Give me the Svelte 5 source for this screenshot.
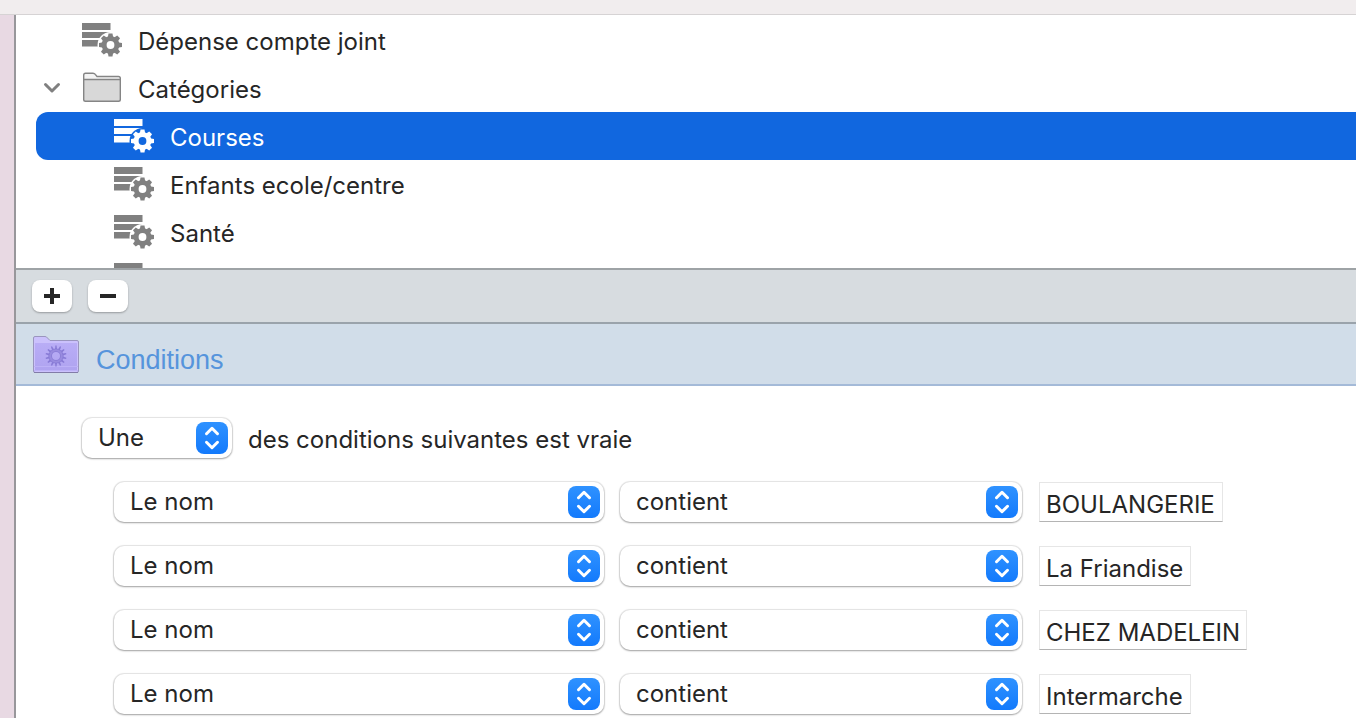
<script>
  const tree = [
    { id: 1, label: 'Dépense compte joint', depth: 0, kind: 'rule' },
    { id: 2, label: 'Catégories', depth: 0, kind: 'folder' },
    { id: 3, label: 'Courses', depth: 1, kind: 'rule' },
    { id: 4, label: 'Enfants ecole/centre', depth: 1, kind: 'rule' },
    { id: 5, label: 'Santé', depth: 1, kind: 'rule' },
    { id: 6, label: '', depth: 1, kind: 'rule' }
  ];

  const conditions = [
    { id: 1, value: 'BOULANGERIE', width: 184 },
    { id: 2, value: 'La Friandise', width: 152 },
    { id: 3, value: 'CHEZ MADELEIN', width: 208 },
    { id: 4, value: 'Intermarche', width: 152 }
  ];

  const teeth = [0, 45, 90, 135, 180, 225, 270, 315];
  const folderTeeth = Array.from({ length: 14 }, (_, i) => (i * 360) / 14);

  let selected = $state(3);
</script>

{#snippet popup(label, value, options)}
  <span class="popup">
    <select aria-label={label} {value}>
      {#each options as option}
        <option value={option}>{option}</option>
      {/each}
    </select>
    <svg class="arrows" viewBox="0 0 32 32" aria-hidden="true">
      <path d="M10.5 11.7 L16 6.3 L21.5 11.7 M10.5 20.3 L16 25.7 L21.5 20.3" />
    </svg>
  </span>
{/snippet}

<div class="window">
  <div class="titlebar"></div>

  <div class="body">
    <main class="pane">
      <!-- Rule tree -->
      <ul class="tree">
        {#each tree as item (item.id)}
          <li class="row" class:child={item.depth === 1} class:selected={selected === item.id}>
            <span class="gutter">
              {#if item.kind === 'folder'}
                <button class="disclosure" aria-label="Replier">
                  <svg viewBox="0 0 20 12" width="20" height="12"><path d="M3.5 2.5 L10 9 L16.500 2.5" /></svg>
                </button>
              {/if}
            </span>
            <button class="item" aria-label={item.label || 'Règle'} onclick={() => (selected = item.id)}>
              {#if item.kind === 'folder'}
                <svg class="icon" viewBox="0 0 40 34" aria-hidden="true">
                  <path
                    class="folder-back"
                    d="M1.7 9 V4 Q1.7 2.2 3.5 2.2 H11 Q12.5 2.2 13.3 3.4 L15 5.5 H36.5 Q38.3 5.5 38.3 7.3 V9 Z"
                  />
                  <path
                    class="folder-front"
                    d="M1.7 8.5 H38.3 V28.5 Q38.3 30.3 36.5 30.3 H3.5 Q1.7 30.3 1.7 28.5 Z"
                  />
                </svg>
              {:else}
                <svg class="icon" viewBox="0 0 40 34" aria-hidden="true">
                  <path class="ink" d="M0 0 H28.5 V7 H0 Z M0 9 H28.5 V15 H0 Z M0 17 H20 V23.5 H0 Z" />
                  <circle class="halo" cx="28.5" cy="22" r="13" />
                  {#each teeth as angle}
                    <path class="ink" d="M25.7 15 L26.5 10.5 H30.5 L31.3 15 Z" transform="rotate({angle} 28.5 22)" />
                  {/each}
                  <circle class="ring" cx="28.5" cy="22" r="6.4" />
                </svg>
              {/if}
              <span>{item.label}</span>
            </button>
          </li>
        {/each}
      </ul>

      <div class="toolbar">
        <button class="square" aria-label="Ajouter">
          <svg viewBox="0 0 16 16" width="16" height="16"><path d="M0 8 H16 M8 0 V16" /></svg>
        </button>
        <button class="square" aria-label="Supprimer">
          <svg viewBox="0 0 16 16" width="16" height="16"><path d="M0 8 H16" /></svg>
        </button>
      </div>

      <header class="section">
        <svg viewBox="0 0 48 40" width="48" height="40" aria-hidden="true">
          <defs>
            <linearGradient id="lilac" x1="0" y1="0" x2="0" y2="1">
              <stop offset="0" stop-color="#b9adf6" />
              <stop offset="1" stop-color="#afa3f0" />
            </linearGradient>
          </defs>
          <path
            d="M1.5 37 V4 Q1.5 2.5 3 2.5 H13 Q14.500 2.5 15.5 4 L18 6.5 H45 Q46.5 6.5 46.5 8 V37 Q46.5 38.5 45 38.5 H3 Q1.5 38.5 1.5 37 Z"
            fill="#cbc1fc"
            stroke="#9a95be"
          />
          <path d="M3 9 H45 V37 H3 Z" fill="url(#lilac)" />
          <path d="M2 32.5 H46 M2 36.5 H46" stroke="#bdb2f7" />
          <path d="M2 38.5 H46" stroke="#827ca8" />
          {#each folderTeeth as angle}
            <path d="M23 15 L23.4 11.5 H24.600 L25 15 Z" fill="#887bd6" transform="rotate({angle} 24 22)" />
          {/each}
          <circle cx="24" cy="22" r="5.8" fill="none" stroke="#887bd6" stroke-width="3.6" />
          <circle cx="24" cy="22" r="5.8" fill="none" stroke="#988bdf" stroke-width="2" />
        </svg>
        <h2>Conditions</h2>
      </header>

      <!-- Conditions editor -->
      <form class="conditions">
        <div class="match">
          {@render popup('Correspondance', 'Une', ['Une', 'Toutes'])}
          <span>des conditions suivantes est vraie</span>
        </div>

        {#each conditions as condition (condition.id)}
          <div class="condition">
            {@render popup('Critère', 'Le nom', ['Le nom', 'Le montant'])}
            {@render popup('Opérateur', 'contient', ['contient', 'est'])}
            <input type="text" aria-label="Valeur" value={condition.value} style:width="{condition.width}px" />
          </div>
        {/each}
      </form>
    </main>
  </div>
</div>

<style>
  :global(body) {
    margin: 0;
    background: #fff;
  }

  .window {
    height: 100vh;
    display: flex;
    flex-direction: column;
    overflow: hidden;
    font-family: Inter, 'Liberation Sans', sans-serif;
    font-size: 24px;
    line-height: 32px;
    color: #262626;
  }

  .window * {
    box-sizing: border-box;
  }

  button,
  select,
  input {
    margin: 0;
    border: 0;
    font: inherit;
    color: inherit;
    outline: none;
  }

  .titlebar {
    flex: none;
    height: 15px;
    background: #f1edee;
    border-bottom: 1px solid #d6d3d4;
  }

  .body {
    flex: 1;
    min-height: 0;
    padding-left: 14px;
    background: #e8d9e3;
  }

  .pane {
    height: 100%;
    overflow: hidden;
    border-left: 2px solid #98979b;
    background: #fff;
  }

  /* Tree */

  .tree {
    height: 255px;
    margin: 0;
    padding: 1px 0 0 20px;
    overflow: hidden;
    list-style: none;
    border-bottom: 2px solid #9ea3a6;
  }

  .row {
    --row-bg: #fff;
    --ink: #808080;
    display: flex;
    height: 48px;
    background: var(--row-bg);
  }

  .row.selected {
    --row-bg: #1167df;
    --ink: #fff;
    border-radius: 12px 0 0 12px;
    color: #fff;
  }

  .gutter {
    display: flex;
    flex: none;
    align-items: center;
    width: 46px;
    padding-left: 6px;
  }

  .child .gutter {
    width: 78px;
  }

  .item {
    display: flex;
    flex: 1;
    gap: 16px;
    align-items: center;
    padding: 4px 0 0;
    background: none;
    text-align: left;
  }

  .icon {
    flex: none;
    width: 40px;
    height: 34px;
    margin-bottom: 4px;
  }

  .ink {
    fill: var(--ink);
  }

  .halo {
    fill: var(--row-bg);
  }

  .ring {
    fill: none;
    stroke: var(--ink);
    stroke-width: 5;
  }

  .folder-back {
    fill: #f4f4f4;
    stroke: #858585;
    stroke-width: 1.4;
  }

  .folder-front {
    fill: #d8d8d8;
    stroke: #858585;
    stroke-width: 1.4;
  }

  .disclosure {
    display: flex;
    padding: 2px 0;
    background: none;
  }

  .disclosure path {
    fill: none;
    stroke: #808080;
    stroke-width: 3;
    stroke-linecap: round;
    stroke-linejoin: round;
  }

  /* Add / remove bar */

  .toolbar {
    display: flex;
    gap: 16px;
    padding: 10px 16px;
    background: #d7dce0;
    border-bottom: 2px solid #9aa3ab;
  }

  .square {
    display: flex;
    align-items: center;
    justify-content: center;
    width: 40px;
    height: 32px;
    padding: 0;
    border-radius: 8px;
    background: #fff;
    box-shadow: 0 1px 2px rgba(0, 0, 0, 0.3);
  }

  .square path {
    stroke: #262626;
    stroke-width: 4;
  }

  /* Section header */

  .section {
    display: flex;
    gap: 16px;
    align-items: center;
    height: 62px;
    padding: 0 16px;
    background: #d1dde9;
    border-bottom: 2px solid #a4bad8;
  }

  .section h2 {
    margin: 0;
    padding-top: 12px;
    font-family: 'Liberation Sans', sans-serif;
    font-size: 27px;
    font-weight: 300;
    color: #5694dc;
  }

  /* Conditions */

  .conditions {
    display: grid;
    gap: 24px;
    padding: 32px 16px 0 66px;
  }

  .match {
    display: grid;
    grid-template-columns: 150px 1fr;
    gap: 16px;
    align-items: center;
  }

  .match > span:last-child {
    padding-top: 4px;
  }

  .condition {
    display: grid;
    grid-template-columns: minmax(0, 490px) minmax(0, 402px) 1fr;
    gap: 16px;
    padding-left: 32px;
  }

  .popup {
    position: relative;
    display: block;
    height: 40px;
  }

  .popup select {
    appearance: none;
    display: block;
    width: 100%;
    height: 40px;
    padding: 0 40px 0 16px;
    border-radius: 10px;
    background: #fff;
    box-shadow:
      0 0 1px 1px rgba(0, 0, 0, 0.1),
      0 1px 2px rgba(0, 0, 0, 0.3);
  }

  .arrows {
    position: absolute;
    top: 4px;
    right: 4px;
    width: 32px;
    height: 32px;
    border-radius: 8px;
    background: linear-gradient(#2f92ff, #137afc);
    pointer-events: none;
  }

  .arrows path {
    fill: none;
    stroke: #fff;
    stroke-width: 3;
    stroke-linecap: round;
    stroke-linejoin: round;
  }

  input {
    height: 40px;
    margin-left: 1px;
    padding: 4px 0 0 6px;
    border: 1px solid #e6e6e6;
    border-bottom-color: #b4b4b4;
    background: #fff;
  }
</style>
